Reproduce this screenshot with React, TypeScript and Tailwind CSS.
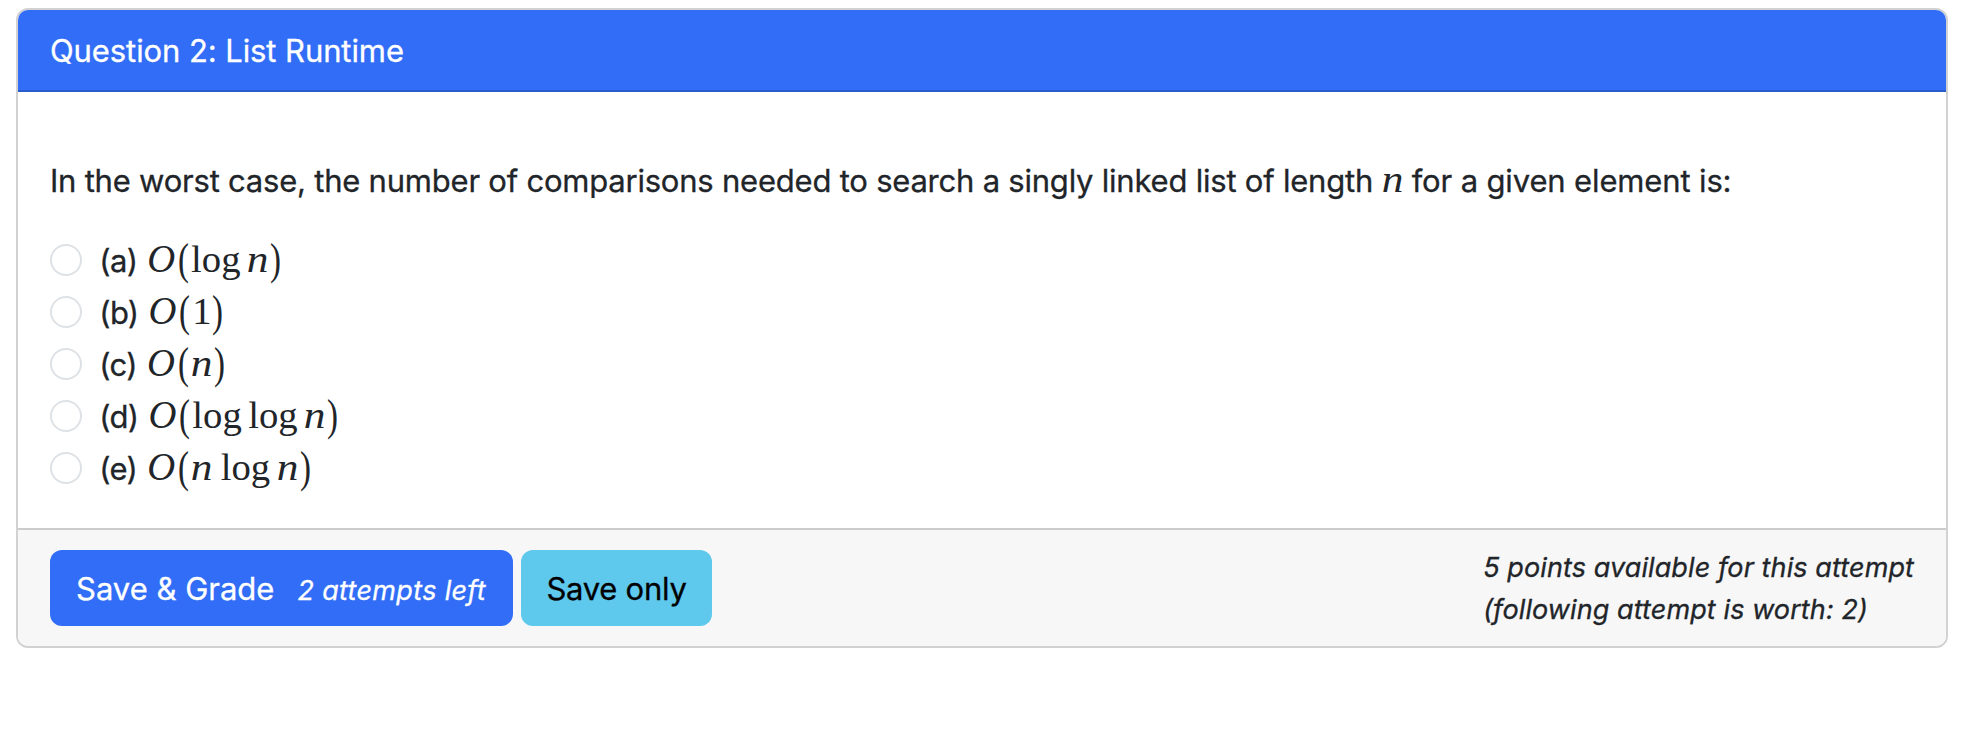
import type { ReactNode } from "react";

function G({ c, w, sx, italic }: { c: string; w: string; sx?: string; italic?: boolean }) {
  return (
    <span className={`inline-block text-center whitespace-nowrap ${w} ${italic ? "italic" : ""}`}>
      <span className={`inline-block ${sx ?? ""}`}>{c}</span>
    </span>
  );
}
const N = () => <G c="n" w="w-[0.6em]" sx="-translate-x-px scale-x-112" italic />;
const Log = () => <G c="log" w="w-[1.278em]" />;
const Thin = () => <span className="inline-block w-[0.167em]" />;

function MathText({ children }: { children: ReactNode }) {
  return (
    <span className="font-['Liberation_Serif',serif] text-[38.7px] leading-none tracking-normal [-webkit-text-stroke:0px]">
      {children}
    </span>
  );
}

function BigO({ children }: { children: ReactNode }) {
  return (
    <MathText>
      <G c="O" w="w-[0.763em]" sx="origin-[50%_80%] scale-y-106" italic />
      <G c="(" w="w-[0.389em]" sx="scale-x-85 scale-y-115" />
      {children}
      <G c=")" w="w-[0.389em]" sx="-translate-x-[2px] scale-x-85 scale-y-115" />
    </MathText>
  );
}

const options: { key: string; body: ReactNode }[] = [
  { key: "a", body: <><Log /><Thin /><N /></> },
  { key: "b", body: <G c="1" w="w-[0.5em]" /> },
  { key: "c", body: <N /> },
  { key: "d", body: <><Log /><Thin /><Log /><Thin /><N /></> },
  { key: "e", body: <><N /><Thin /><Log /><Thin /><N /></> },
];

export default function App() {
  return (
    <div className="min-h-[734px] bg-white px-4 pt-2 font-['Inter',sans-serif] text-[31px] leading-[48px] text-[#212529] [-webkit-text-stroke:0.3px]">
      <main className="flex h-[640px] w-[1932px] flex-col overflow-hidden rounded-xl border-2 border-[#d2d2d2] bg-white">
        <header className="h-[82px] border-b-2 border-[#2a5cce] bg-[#316df6] px-8 pt-[17px] tracking-[-0.09px] text-white">
          Question 2: List Runtime
        </header>
        <section className="h-[436px] px-8 pt-[65px]">
          <p className="h-12 whitespace-nowrap">
            <span className="tracking-[-0.22px]">
              In the worst case, the number of comparisons needed to search a singly linked list of length
            </span>{" "}
            <MathText><N /></MathText>{" "}
            <span className="-ml-[2px] tracking-[-0.14px]">for a given element is:</span>
          </p>
          <div className="mt-[29px] flex flex-col">
            {options.map((o) => (
              <label key={o.key} className="flex h-[52px] items-center">
                <input
                  type="radio"
                  name="answer"
                  className="size-8 appearance-none rounded-full border-2 border-[#dee2e6] bg-white"
                />
                <span className="mt-[2px] ml-[17.3px] h-12 whitespace-nowrap">
                  <span className="mr-[0.6px] tracking-[-0.7px]">({o.key})</span> <BigO>{o.body}</BigO>
                </span>
              </label>
            ))}
          </div>
        </section>
        <footer className="flex flex-1 items-center justify-between border-t-2 border-[#cccccc] bg-[#f7f7f7] px-8">
          <div className="flex gap-2">
            <button className="flex h-[76px] w-[463px] items-baseline rounded-xl bg-[#316df6] px-[26px] pt-[15px] whitespace-nowrap text-white">
              <span>Save &amp; Grade</span>
              <span className="ml-[23px] text-[27px] tracking-[0.33px] italic">2 attempts left</span>
            </button>
            <button className="h-[76px] w-[191px] rounded-xl bg-[#5ec8ed] pt-[2px] tracking-[-0.25px] text-black">
              Save only
            </button>
          </div>
          <div className="mt-[2px] text-[27px] leading-[42px] tracking-[0.1px] italic">
            5 points available for this attempt
            <br />
            (following attempt is worth: 2)
          </div>
        </footer>
      </main>
    </div>
  );
}
